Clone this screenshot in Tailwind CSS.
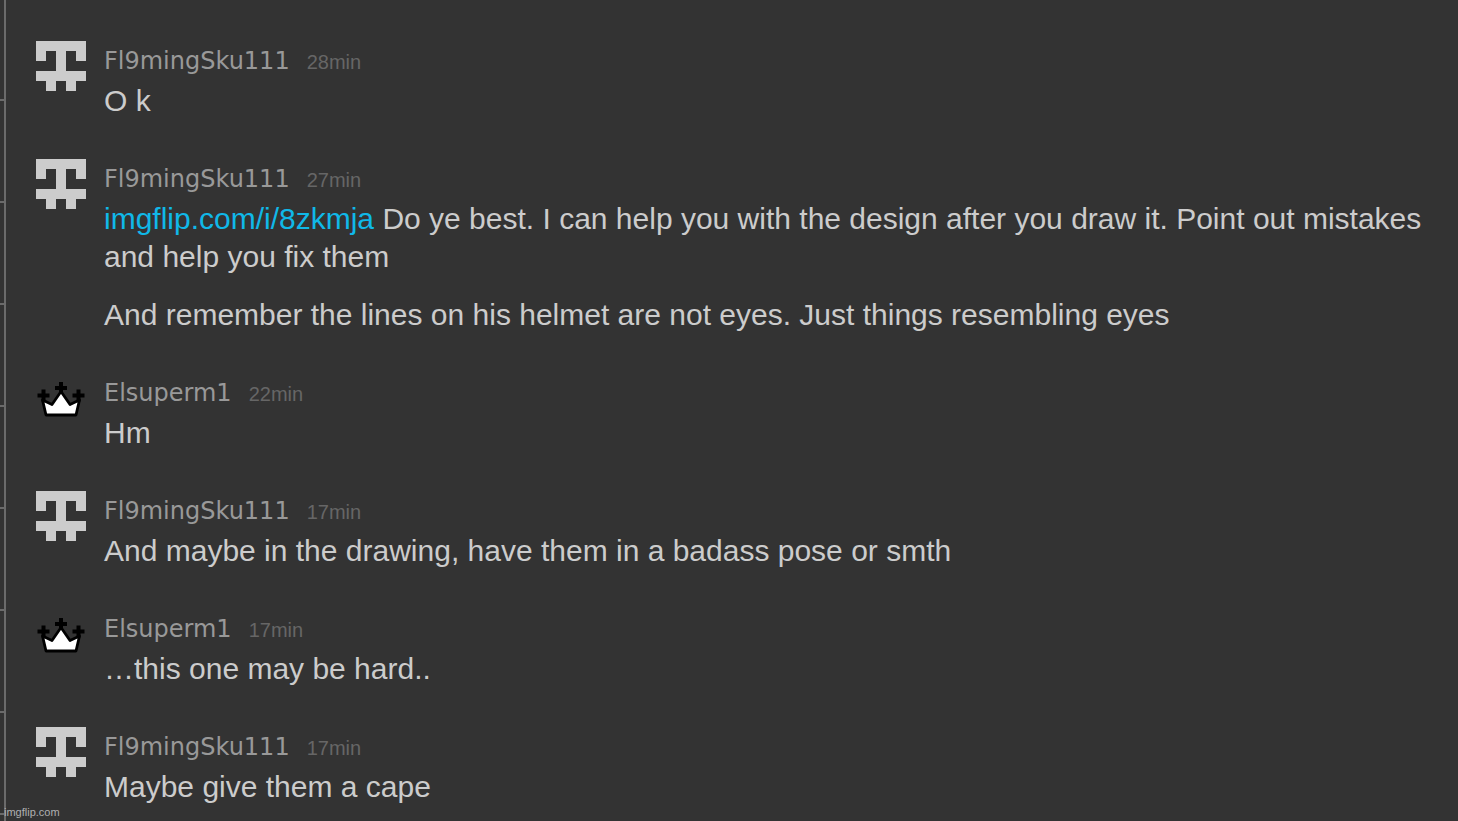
<!DOCTYPE html>
<html lang="en">
  <head>
    <meta charset="UTF-8" />
    <meta name="viewport" content="width=device-width, initial-scale=1.0" />
    <title>Chat</title>
    <script src="https://cdn.jsdelivr.net/npm/@tailwindcss/browser@4"></script>
  </head>
  <body
    class="relative flex min-h-screen bg-[#333333] text-[#cccccc] font-['Liberation_Sans',Arial,sans-serif]"
  >
    <!-- Shared avatars -->
    <svg class="hidden" aria-hidden="true">
      <symbol id="skull" viewBox="0 0 50 50">
        <path
          fill="#cccccc"
          d="M0 0H50V20H40V10H30V30H50V40H40V50H30V40H20V50H10V40H0V30H20V10H10V20H0Z"
        />
      </symbol>
      <symbol id="crown" viewBox="0 0 50 50">
        <path
          d="M23 9h4v4h4v4h-4v4h-4v-4h-4v-4h4zM5.5 16.5h4v4h4v4h-4v4h-4v-4h-4v-4h4zM40.5 16.5h4v4h4v4h-4v4h-4v-4h-4v-4h4z"
        />
        <path
          fill="#ffffff"
          stroke="#000000"
          stroke-width="2.8"
          stroke-linejoin="round"
          d="M6.5 27L16 31.5L25 18.5L34 31.5L43.5 27L40 42H10Z"
        />
      </symbol>
    </svg>

    <!-- Edge of the neighbouring panel -->
    <div class="flex w-[6px] shrink-0 flex-col border-r-2 border-[#6b6b6b]">
      <div class="h-[101px] border-b-2 border-[#6b6b6b]"></div>
      <div class="h-[102px] border-b-2 border-[#6b6b6b]"></div>
      <div class="h-[102px] border-b-2 border-[#6b6b6b]"></div>
      <div class="h-[102px] border-b-2 border-[#6b6b6b]"></div>
      <div class="h-[102px] border-b-2 border-[#6b6b6b]"></div>
      <div class="h-[102px] border-b-2 border-[#6b6b6b]"></div>
      <div class="h-[102px] border-b-2 border-[#6b6b6b]"></div>
      <div class="h-[102px] border-b-2 border-[#6b6b6b]"></div>
    </div>

    <main
      class="flex min-w-0 flex-1 flex-col gap-[39px] pt-[41px] pr-6 pl-[30px] text-[30px] leading-[38px]"
    >
      <article class="flex gap-[18px]">
        <svg class="size-[50px] shrink-0"><use href="#skull" /></svg>
        <div class="min-w-0 flex-1">
          <header class="flex h-[41px] items-baseline gap-[17px] leading-10">
            <span class="font-['DejaVu_Sans',Verdana,sans-serif] text-2xl leading-10 text-[#999999]">Fl9mingSku111</span>
            <time class="text-xl leading-10 text-[#666666]">28min</time>
          </header>
          <p>O k</p>
        </div>
      </article>

      <article class="flex gap-[18px]">
        <svg class="size-[50px] shrink-0"><use href="#skull" /></svg>
        <div class="min-w-0 flex-1">
          <header class="flex h-[41px] items-baseline gap-[17px] leading-10">
            <span class="font-['DejaVu_Sans',Verdana,sans-serif] text-2xl leading-10 text-[#999999]">Fl9mingSku111</span>
            <time class="text-xl leading-10 text-[#666666]">27min</time>
          </header>
          <p>
            <a href="#" class="text-[#10b8e8] hover:underline">imgflip.com/i/8zkmja</a>
            Do ye best. I can help you with the design after you draw it. Point
            out mistakes and help you fix them
          </p>
          <p class="mt-5">
            And remember the lines on his helmet are not eyes. Just things
            resembling eyes
          </p>
        </div>
      </article>

      <article class="flex gap-[18px]">
        <svg class="size-[50px] shrink-0"><use href="#crown" /></svg>
        <div class="min-w-0 flex-1">
          <header class="flex h-[41px] items-baseline gap-[17px] leading-10">
            <span class="font-['DejaVu_Sans',Verdana,sans-serif] text-2xl leading-10 text-[#999999]">Elsuperm1</span>
            <time class="text-xl leading-10 text-[#666666]">22min</time>
          </header>
          <p>Hm</p>
        </div>
      </article>

      <article class="flex gap-[18px]">
        <svg class="size-[50px] shrink-0"><use href="#skull" /></svg>
        <div class="min-w-0 flex-1">
          <header class="flex h-[41px] items-baseline gap-[17px] leading-10">
            <span class="font-['DejaVu_Sans',Verdana,sans-serif] text-2xl leading-10 text-[#999999]">Fl9mingSku111</span>
            <time class="text-xl leading-10 text-[#666666]">17min</time>
          </header>
          <p>And maybe in the drawing, have them in a badass pose or smth</p>
        </div>
      </article>

      <article class="flex gap-[18px]">
        <svg class="size-[50px] shrink-0"><use href="#crown" /></svg>
        <div class="min-w-0 flex-1">
          <header class="flex h-[41px] items-baseline gap-[17px] leading-10">
            <span class="font-['DejaVu_Sans',Verdana,sans-serif] text-2xl leading-10 text-[#999999]">Elsuperm1</span>
            <time class="text-xl leading-10 text-[#666666]">17min</time>
          </header>
          <p>…this one may be hard..</p>
        </div>
      </article>

      <article class="flex gap-[18px]">
        <svg class="size-[50px] shrink-0"><use href="#skull" /></svg>
        <div class="min-w-0 flex-1">
          <header class="flex h-[41px] items-baseline gap-[17px] leading-10">
            <span class="font-['DejaVu_Sans',Verdana,sans-serif] text-2xl leading-10 text-[#999999]">Fl9mingSku111</span>
            <time class="text-xl leading-10 text-[#666666]">17min</time>
          </header>
          <p>Maybe give them a cape</p>
        </div>
      </article>
    </main>

    <span class="absolute bottom-px left-1 text-[11px] leading-4 text-[#b0b0b0]">imgflip.com</span>
  </body>
</html>
